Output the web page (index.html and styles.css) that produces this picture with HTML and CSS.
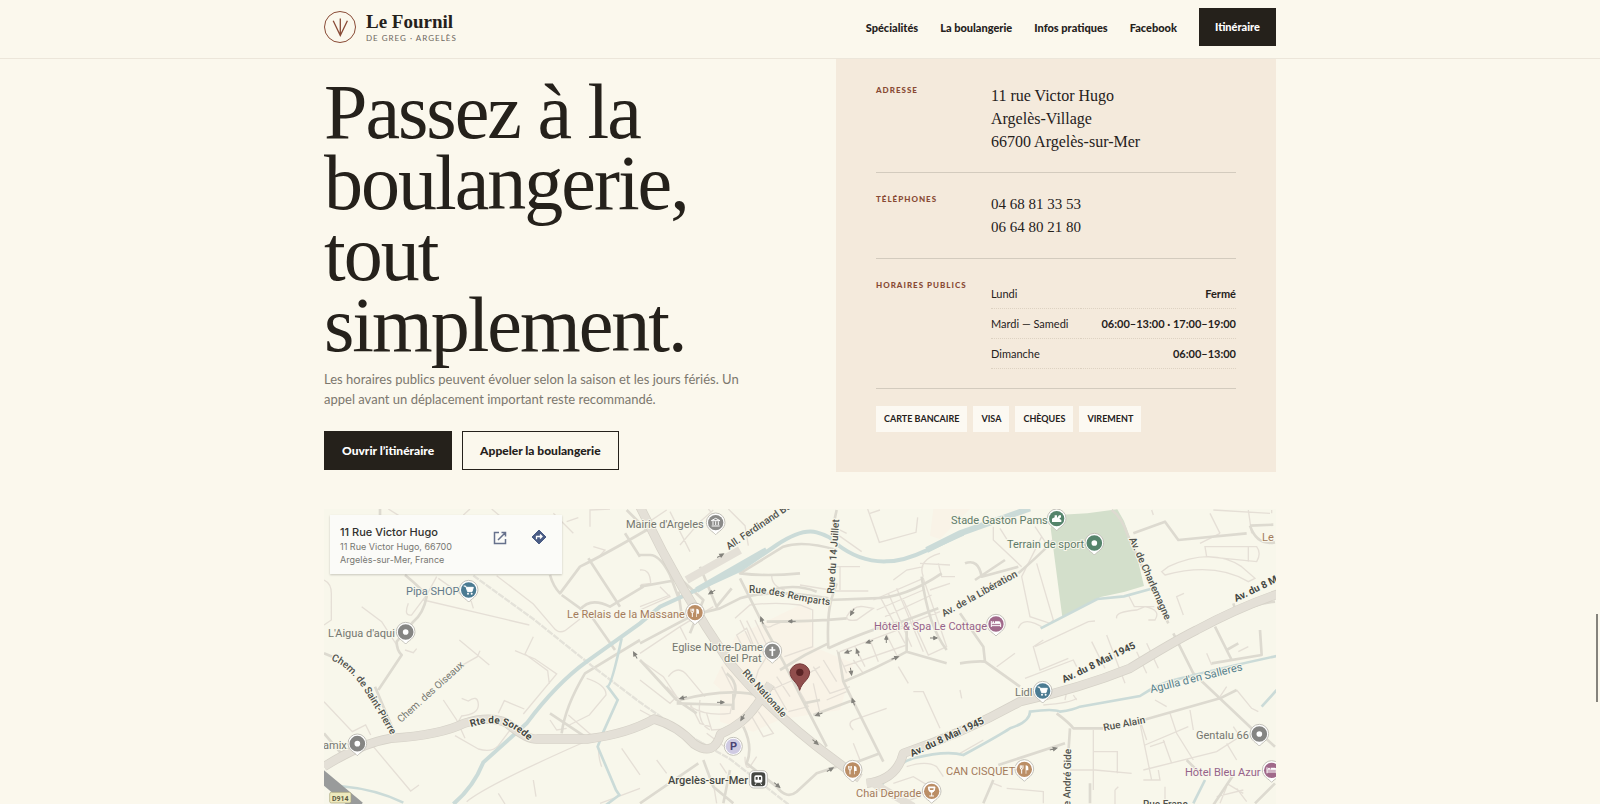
FILE: index.html
```html
<!DOCTYPE html>
<html lang="fr">
<head>
  <meta charset="UTF-8">
  <meta name="viewport" content="width=device-width, initial-scale=1.0">
  <title>Le Fournil de Greg</title>
  <link rel="stylesheet" href="styles.css">
</head>
<body>
  <header class="site-header">
    <div class="container header-inner">
      <a class="brand" href="#">
        <svg class="brand-mark" viewBox="0 0 32 32" aria-hidden="true">
          <circle cx="16" cy="16" r="15.500"/>
          <path d="M16.300 7.500V25M9.200 9.800l7.100 14.700L23.400 9.800" stroke-width="1.300"/>
        </svg>
        <span class="brand-text">
          <span class="brand-name">Le Fournil</span>
          <span class="brand-sub">De Greg · Argelès</span>
        </span>
      </a>
      <nav class="nav">
        <a href="#specialites">Spécialités</a>
        <a href="#boulangerie">La boulangerie</a>
        <a href="#infos">Infos pratiques</a>
        <a href="#facebook">Facebook</a>
        <a class="nav-cta" href="#map">Itinéraire</a>
      </nav>
    </div>
  </header>

  <main class="container">
    <section class="infos" id="infos">
      <div class="intro">
        <h1>Passez à la boulangerie, tout simplement.</h1>
        <p>Les horaires publics peuvent évoluer selon la saison et les jours fériés. Un appel avant un déplacement important reste recommandé.</p>
        <div class="actions">
          <a class="btn btn-dark" href="#map">Ouvrir l’itinéraire</a>
          <a class="btn" href="tel:0468813353">Appeler la boulangerie</a>
        </div>
      </div>

      <div class="card">
        <div class="row">
          <h2>Adresse</h2>
          <address>11 rue Victor Hugo<br>Argelès-Village<br>66700 Argelès-sur-Mer</address>
        </div>
        <div class="row">
          <h2>Téléphones</h2>
          <div class="phones">
            <a href="tel:0468813353">04 68 81 33 53</a>
            <a href="tel:0664802180">06 64 80 21 80</a>
          </div>
        </div>
        <div class="row">
          <h2>Horaires publics</h2>
          <table class="hours">
            <tbody>
              <tr><th scope="row">Lundi</th><td>Fermé</td></tr>
              <tr><th scope="row">Mardi — Samedi</th><td>06:00–13:00 · 17:00–19:00</td></tr>
              <tr><th scope="row">Dimanche</th><td>06:00–13:00</td></tr>
            </tbody>
          </table>
        </div>
        <ul class="payments">
          <li>Carte bancaire</li>
          <li>Visa</li>
          <li>Chèques</li>
          <li>Virement</li>
        </ul>
      </div>
    </section>

    <section class="map" id="map">
      <svg class="map-canvas" viewBox="4 9 952 295" preserveAspectRatio="xMidYMin slice">
        <defs>
          <path id="pin" d="M0 36C-7 27-28 19-28-1A28 28 0 0 1 28-1C28 19 7 27 0 36z"/>
          <g id="fork"><path d="M-8-12v8M-4-12v8M-12-12v8q0 4 4 4t4-4M-8-1v14" fill="none" stroke="#fff" stroke-width="3"/><path d="M4 13V-12q8 0 8 8v7H6v10z" fill="#fff"/></g>
          <g id="cart"><path d="M-15-12h6l6 17h13l4-13H-7" fill="#fff" stroke="#fff" stroke-width="3"/><circle cx="-2" cy="11" r="3" fill="#fff"/><circle cx="9" cy="11" r="3" fill="#fff"/></g>
          <g id="bed"><path d="M-14-9V9M14 9V-1H-14M-14 5H14" stroke="#fff" stroke-width="3" fill="none"/><circle cx="-8" cy="-5" r="3" fill="#fff"/><path d="M-3-8H9q5 0 5 6H-3z" fill="#fff"/></g>
          <path id="arrow" d="M-11 0H2M0-5L11 0 0 5z"/>
          <path id="curve-pierre" d="M11 160C38 170 52 205 74 240"/>
          <path id="curve-sorede" d="M151 227C172 220 188 222 208 240"/>
          <path id="curve-remparts" d="M429 93C453 92 480 103 509 105"/>
        </defs>

        <g transform="scale(.33333)">
          <!-- zones -->
          <path class="zone" d="M1840 27h110l-90 90-30-10zM1245 410l225-110 10 140 120 50-40 140-190 30-130-60-60-50zM1200 545l170-20 60 110-130 60-100-30z"/>
          <path class="park" d="M2192 85l20-40 90-5 90-12 20 35 40 110 20 85-60 18-70 15-115 60z"/>

          <!-- streets -->
          <g class="street">
            <path d="M12 240q22 10 22 40v80l-22 15M12 605l85 90 40-20 15 30M150 728l122 145 25-18M125 320l60 45 45 70M265 310q-15 40 10 35l45-60 30-55M355 235l100 70M310 300q170 40 318 75M460 325l-6-20M530 227l110 85 60 70q15 20 35 10l45-35M418 420l90 75M410 505l62-35 8-18M585 452l60 25 65 45-100 120M640 410l-25 52 68 50 5 40M425 595l20 8q28-20 30 10t-50 35l-20 35M370 600l40 60 25 55M405 707l70 40q40 12 60-10l45-60M535 640l18-38 60 25M440 905q60-50 360-182M640 840l8 50M535 880l20 32M690 660l20 30 30-5M745 645l80 70M800 535q60 20 58 50l-50 60-60 30M905 745l55 80M835 735q0 40 10 65M255 450l25 8 10-12M205 27l40 25M430 45l20-18M515 27l60 50M700 40l60 60M810 80v-50l60-3M740 65l35-12M820 140l35 10-20 22M840 910l120-45"/>
            <path transform="translate(960)" d="M0 210q30-5 32 40l-30 4M0 330l90-40-30-30M0 460l120-80 100-60M0 320l90-35M120 135l60-70 40-35M20 70l60-40M90 35l60 120M285 355l45-40q80-10 150 0l38 15v110l-85 30M300 360l35 75M320 362l40 80M345 360l35 75M290 405l30-20 20 50-30 10zM370 370q10 20 30 5l28-10M395 225q0 35 40 45M480 255l110 18h95M600 200v70M570 200h90M580 95l85 60M590 85l30 15M683 27l35 100 110-30 5-45M690 40l30-10M620 350q20-35 50-30t30 5l-50 35q-30 5-30-10M700 300l150-65 70 205-55 25-75-165M720 290l75 140M745 280l70 160M770 265l80 190M710 330l140-60M735 350l140-65M770 385l130-50M600 455l200-75M610 500l190-65M645 440l30 60M690 420l25 65M740 405l30 60M620 520l-30-70M360 585l100-45 45 80-60 15M400 560l40 70M520 500l50 80 60-20M550 480l40 65M480 535l60-35M560 600l60-25M540 640l-20-90M355 635l45 65-30 10-40-70M380 470l-25 40-15 50M410 530l40 60M775 500l30 50M640 480l30 40M820 575h30l50 110M640 690q-20-20 0-30l100-35M640 730l20 50M0 480l70 50 40 60-20 20L0 540M85 530q30-40 60 0l50 60M150 620q50 30 120 20l15-60-40-80M200 640l15 50 70-5M180 600q-10 70 30 90M150 610l30 60 30 10M80 560l40 40M120 380l20 40M315 770q0 40 15 30l20-30M50 780l30 40M240 790l20 30M220 850l10 60M0 630l110 60 80 40M200 700l80 60M205 27l40 45M265 27l50 50 10 60M850 230q-20-50 50-70M870 270l60-20M895 190l10 40h40M840 190l90 5M760 240l40-30 50-10M760 850l60-20 50 30M800 800q60-20 90 0l20 30M780 910l60-20"/>
            <path transform="translate(1920)" d="M100 80v40l85 80M120 85l25 40M225 80l40 60M245 110l-60 120 25 120 60 20 10-10-50-170M175 385q10-30 50-15l20 10M250 420l-30 20 20 70 85-35M195 535l145-55 10 20M110 500l55-40M0 570l5 25M225 440l160-75 20-2M395 425l40 80M440 405l55 145M530 455l30 65M560 430l35 75M505 285l18 35h60M470 355q-5-20 60-25l25-10q50 10 30 40l-20 0M670 345l-20-55 22-10M250 615q80-5 100-20M315 600l5-25 35-8M340 585l10 15M605 215l20-15q130-60 220 0l40 35-20 10q-100-60-250-20zM735 140h155q15 20 0 45l-150-15zM865 140v45M575 30l5 15M750 40l30 60M760 30l170 10M865 30l10 70M935 30v10M865 440l-30 15M740 460l15 35M720 130l60-30M620 620l-35-20M690 630l10 60M400 690v180M400 755h72v65M330 810h75l110 10M540 670l35 170-25 0M555 735l130-55M560 720l-20-60M610 720l25 70M550 810l220-55 70-45-20-30M570 740l45-15M630 640l20 60 50 80M800 560l-20 30M830 570l45 55 20 10M800 730l30 50M570 840l30 0-5-30M615 860v50M465 870v42M465 870l10-10M140 865l110 10v35M100 850l25 10M0 760l70-40M780 910l20-50M830 865l30 40M800 850l50 30M850 870l-80 20"/>
          </g>
          <g class="road">
            <path d="M255 225q55 45 65 65-10 50-40 75l-50 60q0 25 15 40l-70 105M165 560l55 130M12 460l25 10M690 225q10 35 30 55l60-80q80-40 200-110l-60-60M915 100l45 70M805 175l95 145M725 285l90 65 70 100M780 330q30-40 90-10l100-60M725 700q10-80 70-180l165-100M690 640l105 70M12 700l60 70M180 27v20"/>
            <path transform="translate(960)" d="M0 165h30q30 0 60 60l30 80M0 430l160-85 80-20 60-30q90-30 265 0M115 275l10 70M300 235l70 140 60 110 55 110 75 145M60 180l130 120-40 100M180 200l50 120 45-55M0 260l110-20M565 445q-5-100 10-150l15-45M590 30l-10 45M565 300l130-5q100 0 210-75M380 365q130 0 240-10M565 445q130-60 220-80l110-40M610 545q100-40 190-90l120 35M800 370v90M610 545l-15-90M610 545l120 240M420 510l75-45 70-35M520 645l120-45M640 790l80-30M490 610l50-10M120 600q150-40 250-10M110 610l170 5M0 480l110 120 60 40M280 580v50M310 680q30 60 10 110l90 70q30 40 60 15l60-55 60-20M175 790L0 910M190 780l30 80 60 50M270 810l-20 100M480 220q-100 10-180 0l130-80q60-20 160 10M260 520q40 30 20 80M845 230q20 150 75 220M390 270q80-20 140 5"/>
            <path transform="translate(1920)" d="M0 340l70 100 5 45 105 75M0 490q55-8 75-5M175 220q80-70 105-100M15 190q40-15 50 40l110-30M45 240l90-60M455 30q30 20 50 80l120 260M520 100l95-35 40 55 205-20M640 400q30 60 60 120l180 170M705 400l100-50q80-40 140-45M820 310l10 30M765 380l50 100M800 450l35-20M900 390l5 75-150 25M290 640q40 30 50 45h90M550 660l230-65 50-25M330 685l-8 120M115 795l200-65M100 840l-30 70M870 77l70-3M870 77q20 60 75 50M680 780l30 30M760 915l60-90M945 850l-60 60M900 700l45 40M390 910v-60"/>
          </g>

          <!-- railway -->
          <path class="rail" d="M460 227l180 130 175 140 145 110 130 90 140 80 180 140"/>

          <!-- water -->
          <path class="water thin" d="M60 858q110 10 190 50M905 415q-30 140-42 145l30 40-45 100-15 40 55 130 10 15-40 30M2162 385l170-88 80-8 80-22M1680 870q25-70 100-95 100-25 150-10 110-60 140-80 60-20 60-50 70-10 90 0 40-5 60-15l180-32q60-40 110-50 160-40 300-70"/>
          <path class="water" d="M400 912q60-50 90-125L620 670q90-120 180-185L960 370l60-50 240-110 110-75q75-50 120-38t60 35q70 55 150 52 50 0 120-33l110-50"/>
          <path class="water wide" d="M1130 270l210-120M1820 150l100-50 210-75"/>
          <path class="water thin" d="M2825 620l45-50M2620 910l35-70"/>

          <!-- main roads -->
          <path class="main edge" d="M12 800q110-70 200-85 150-10 220-45 80-25 130 0 60 50 90 47h150q120-15 200-60 70 20 120 75 60 40 80-30 70-30 110-90l40-60M960 20q120 250 270 470 150 180 390 345M1640 850q90-10 110-90 180-60 350-155 180-40 330-100 130-80 200-115 130-70 250-110"/>
          <path class="main" d="M12 800q110-70 200-85 150-10 220-45 80-25 130 0 60 50 90 47h150q120-15 200-60 70 20 120 75 60 40 80-30 70-30 110-90l40-60M960 20q120 250 270 470 150 180 390 345M1640 850q90-10 110-90 180-60 350-155 180-40 330-100 130-80 200-115 130-70 250-110M1100 240l160-90M1660 850l120 70"/>
          <path class="national" d="M0 824l117 98"/>

          <!-- one-way arrows -->
          <g class="arrows">
            <use href="#arrow" transform="translate(1201 167) rotate(-30)"/>
            <use href="#arrow" transform="translate(1176 276) rotate(150)"/>
            <use href="#arrow" transform="translate(1416 364) rotate(180)"/>
            <use href="#arrow" transform="translate(1326 362) rotate(-110)"/>
            <use href="#arrow" transform="translate(1597 336) rotate(120)"/>
            <use href="#arrow" transform="translate(1649 425) rotate(160)"/>
            <use href="#arrow" transform="translate(1699 418) rotate(-90)"/>
            <use href="#arrow" transform="translate(1841 414)"/>
            <use href="#arrow" transform="translate(1585 455) rotate(160)"/>
            <use href="#arrow" transform="translate(1613 458) rotate(-110)"/>
            <use href="#arrow" transform="translate(1725 474) rotate(-20)"/>
            <use href="#arrow" transform="translate(1593 514) rotate(80)"/>
            <use href="#arrow" transform="translate(1600 606) rotate(-110)"/>
            <use href="#arrow" transform="translate(1497 643) rotate(160)"/>
            <use href="#arrow" transform="translate(1090 593) rotate(165)"/>
            <use href="#arrow" transform="translate(1202 607)"/>
            <use href="#arrow" transform="translate(1268 652) rotate(120)"/>
            <use href="#arrow" transform="translate(1486 726) rotate(40)"/>
            <use href="#arrow" transform="translate(1530 809) rotate(-30)"/>
            <use href="#arrow" transform="translate(1371 855) rotate(40)"/>
            <use href="#arrow" transform="translate(2200 747) rotate(-15)"/>
            <use href="#arrow" transform="translate(946 466) rotate(-120)"/>
          </g>

          <!-- pins -->
          <g transform="translate(446 270)"><use href="#pin" class="pin"/><circle r="23" fill="#4b7b92"/><use href="#cart"/></g>
          <g transform="translate(2168 573)"><use href="#pin" class="pin"/><circle r="23" fill="#4b7b92"/><use href="#cart"/></g>
          <g class="dot">
            <g transform="translate(257 396)"><use href="#pin" class="pin"/><circle r="16"/></g>
            <g transform="translate(112 731)"><use href="#pin" class="pin"/><circle r="16"/></g>
            <g transform="translate(2818 702)"><use href="#pin" class="pin"/><circle r="16"/></g>
            <g transform="translate(2323 129)"><use href="#pin" class="pin"/><circle class="green" r="16"/></g>
          </g>
          <g transform="translate(2210 56)"><use href="#pin" class="pin"/><circle r="23" fill="#55846c"/><path d="M-14 10V0l8-4v-6h7v8l6-8h6v6l-5 4 6 4v6z" fill="#fff"/></g>
          <g transform="translate(1187 68)"><use href="#pin" class="pin"/><circle r="23" fill="#8b8b89"/><path d="M-13-6L0-13 13-6zM-12 10h24M-8-4v11M0-4v11M8-4v11" fill="none" stroke="#fff" stroke-width="3"/></g>
          <g transform="translate(1357 454)"><use href="#pin" class="pin"/><circle r="23" fill="#8b8b89"/><path d="M0-14v28M-9-4H9" stroke="#fff" stroke-width="5"/></g>
          <g transform="translate(1125 338)"><use href="#pin" class="pin"/><circle r="23" fill="#bb8e66"/><use href="#fork"/></g>
          <g transform="translate(1598 810)"><use href="#pin" class="pin"/><circle r="23" fill="#bb8e66"/><use href="#fork"/></g>
          <g transform="translate(2113 808)"><use href="#pin" class="pin"/><circle r="23" fill="#bb8e66"/><use href="#fork"/></g>
          <g transform="translate(1835 874)"><use href="#pin" class="pin"/><circle r="23" fill="#bb8e66"/><path d="M-10-13H10L8-2Q0 8-8-2zM0 2v12M-7 14H7" fill="#fff" stroke="#fff" stroke-width="3"/><path d="M-6-9H6l-1 5H-5z" fill="#bb8e66"/></g>
          <g transform="translate(2028 372)"><use href="#pin" class="pin"/><circle r="23" fill="#a0698a"/><use href="#bed"/></g>
          <g transform="translate(2855 811)"><use href="#pin" class="pin"/><circle r="23" fill="#a0698a"/><use href="#bed"/></g>
          <circle class="pin" cx="1240" cy="739" r="27"/><circle cx="1240" cy="739" r="23" fill="#cfcae2"/>
          <g transform="translate(1315 838)"><rect class="pin" x="-27" y="-26" width="54" height="52" rx="13"/><rect x="-21" y="-21" width="42" height="42" rx="10" fill="#454743"/><rect x="-12" y="-12" width="24" height="22" rx="5" fill="#fff"/><path d="M-8-7H-2V1H-8zM2-7H8V1H2z" fill="#454743"/><path d="M-7 12l-3 5M7 12l3 5" stroke="#fff" stroke-width="3"/></g>
          <path class="marker" d="M1439 571C1433 545 1410 540 1410 516A30 30 0 0 1 1469 516C1469 540 1446 545 1439 571z"/>
          <circle cx="1439.500" cy="517" r="11" fill="#5a2425"/>
          <rect x="29" y="877" width="64" height="32" rx="5" fill="#eee9bd" stroke="#a9a47b" stroke-width="2"/>
        </g>

        <!-- labels -->
        <g class="label">
          <text class="shop" x="86" y="95">Pipa SHOP</text>
          <text x="8" y="137">L'Aigua d'aqui</text>
          <text x="3" y="249">amix</text>
          <text x="306" y="28">Mairie d'Argeles</text>
          <text class="food" x="247" y="118">Le Relais de la Massane</text>
          <text x="352" y="151">Eglise Notre-Dame</text>
          <text x="404" y="162">del Prat</text>
          <text class="station" x="348" y="284">Argelès-sur-Mer</text>
          <text class="food" x="536" y="297">Chai Deprade</text>
          <text class="food" x="626" y="275">CAN CISQUET</text>
          <text class="sport" x="631" y="24">Stade Gaston Pams</text>
          <text class="sport" x="687" y="48">Terrain de sport</text>
          <text class="hotel" x="554" y="130">Hôtel &amp; Spa Le Cottage</text>
          <text class="hotel" x="865" y="276">Hôtel Bleu Azur</text>
          <text x="695" y="196">Lidl</text>
          <text x="876" y="239">Gentalu 66</text>
          <text class="food" x="942" y="41">Le</text>
          <text class="river" transform="translate(831 193) rotate(-14)">Agulla d'en Salleres</text>
          <text class="parking" x="410" y="250">P</text>
          <text class="badge" x="12" y="301">D914</text>
        </g>
        <g class="road-label">
          <text><textPath href="#curve-pierre">Chem. de Saint-Pierre</textPath></text>
          <text class="bold"><textPath href="#curve-sorede">Rte de Sorede</textPath></text>
          <text><textPath href="#curve-remparts">Rue des Remparts</textPath></text>
          <text class="light" transform="translate(81 223) rotate(-42)">Chem. des Oiseaux</text>
          <text transform="translate(409 50) rotate(-34)">All. Ferdinand Buisson</text>
          <text transform="translate(514 94) rotate(-86)">Rue du 14 Juillet</text>
          <text transform="translate(422 173) rotate(48)">Rte Nationale</text>
          <text transform="translate(624 117) rotate(-29)">Av. de la Libération</text>
          <text transform="translate(809 39) rotate(66)">Av. de Charlemagne</text>
          <text class="bold" transform="translate(744 183) rotate(-26)">Av. du 8 Mai 1945</text>
          <text class="bold" transform="translate(592 257) rotate(-25)">Av. du 8 Mai 1945</text>
          <text class="bold" transform="translate(916 102) rotate(-26)">Av. du 8 Mai 1945</text>
          <text transform="translate(784 231) rotate(-11)">Rue Alain</text>
          <text transform="translate(750 318) rotate(-89)">Rue André Gide</text>
          <text x="823" y="308">Rue Franç</text>
        </g>
      </svg>

      <div class="place">
        <div class="place-text">
          <strong>11 Rue Victor Hugo</strong>
          <span>11 Rue Victor Hugo, 66700<br>Argelès-sur-Mer, France</span>
        </div>
        <a href="#map" aria-label="Agrandir le plan">
          <svg width="14" height="14" viewBox="0 0 14 14"><path d="M6 1.500H1.500v11h11V8M8.500 1.500h4v4M12.500 1.500L5 9" fill="none" stroke="#66718c" stroke-width="1.500"/></svg>
        </a>
        <a href="#map" aria-label="Itinéraire">
          <svg width="16" height="16" viewBox="0 0 16 16"><path d="M8 1l7 7-7 7-7-7z" fill="#4a5c85" stroke="#4a5c85" stroke-linejoin="round"/><path d="M5.500 10.200V7.500h5M9 5.500l2 2-2 2" fill="none" stroke="#fff" stroke-width="1.300"/></svg>
        </a>
      </div>
    </section>
  </main>
  <div class="scroll-thumb"></div>
</body>
</html>
```

FILE: styles.css
```css
:root {
  --cream: #fbf8ed;
  --sand: #f4eadc;
  --ink: #25211b;
  --muted: #7c776d;
  --brick: #884a35;
  --line: #d3cbbe;
  --serif: "Palatino Linotype", Palatino, "Liberation Serif", serif;
  --sans: "Segoe UI", Lato, sans-serif;
}

* { box-sizing: border-box; margin: 0; padding: 0; }

html, body { height: 100%; }

body {
  display: flex;
  flex-direction: column;
  overflow: hidden;
  background: var(--cream);
  color: var(--ink);
  font-family: var(--sans);
}

a { color: inherit; text-decoration: none; }

.container { width: 100%; max-width: 992px; margin: 0 auto; padding: 0 20px; }

/* Header */
.site-header { border-bottom: 1px solid #ece6da; }
.header-inner { display: flex; align-items: center; justify-content: space-between; padding-top: 8px; padding-bottom: 12px; }
.brand { display: flex; align-items: center; gap: 10px; }
.brand-mark { width: 32px; height: 32px; fill: none; stroke: var(--brick); }
.brand-text { display: flex; flex-direction: column; }
.brand-name { font: bold 19px/22px var(--serif); }
.brand-sub { font-size: 8px; line-height: 11px; letter-spacing: 1px; text-transform: uppercase; color: #6d675e; }
.nav { display: flex; align-items: center; gap: 22px; font-size: 11px; font-weight: 900; }
.nav-cta { padding: 0 16px; line-height: 38px; background: var(--ink); color: #fff; }

/* Infos */
main { flex: 1; display: flex; flex-direction: column; min-height: 0; }
.infos { display: grid; grid-template-columns: 1fr 1fr; gap: 72px; margin-bottom: 37px; }
.intro { padding-top: 17px; }
h1 { font: 400 78px/71px var(--serif); letter-spacing: -2px; margin-bottom: 9px; }
.intro p { max-width: 420px; font-size: 13px; line-height: 20px; color: var(--muted); margin-bottom: 22px; }
.actions { display: flex; gap: 10px; }
.btn { padding: 0 17px; border: 1px solid var(--ink); font-size: 12px; font-weight: 900; line-height: 37px; }
.btn-dark { background: var(--ink); color: #fff; }

/* Card */
.card { background: var(--sand); padding: 5px 40px 40px; }
.row { display: grid; grid-template-columns: 95px 1fr; gap: 20px; padding: 20px 0 19px; border-bottom: 1px solid var(--line); }
.row h2 { font-size: 8px; font-weight: 900; line-height: 12px; letter-spacing: 1px; text-transform: uppercase; white-space: nowrap; color: var(--brick); }
.row address { font: 400 16px/23px var(--serif); }
.phones { display: flex; flex-direction: column; font: 400 15px/23px var(--serif); }
.hours { width: 100%; border-collapse: collapse; font-size: 11px; line-height: 29px; }
.hours tr { border-bottom: 1px dotted #ddd2c2; }
.hours th { font-weight: 400; text-align: left; }
.hours td { font-weight: 700; text-align: right; }
.payments { display: flex; gap: 6px; margin-top: 17px; list-style: none; }
.payments li { padding: 0 8px; background: #fcf9f2; font-size: 9px; font-weight: 700; line-height: 26px; text-transform: uppercase; }

/* Map */
.map { position: relative; flex: 1; min-height: 0; overflow: hidden; background: #f8f7eb; }
.map-canvas { display: block; width: 100%; height: 100%; fill: none; }
.zone { fill: #f9f3e7; }
.park { fill: #d3dfcb; }
.street { stroke: #e5dfd6; stroke-width: 4; }
.road { stroke: #dddad0; stroke-width: 8; stroke-linejoin: round; }
.rail { stroke: #e4e2d9; stroke-width: 7; stroke-dasharray: 20 3; }
.water { stroke: #cbdbd8; stroke-width: 12; }
.water.thin { stroke-width: 8; }
.water.wide { stroke-width: 18; }
.main { stroke: #e4e0d7; stroke-width: 24; stroke-linejoin: round; }
.main.edge { stroke: #d5d1c7; stroke-width: 28; }
.national { stroke: #999b9b; stroke-width: 36; }
.arrows { fill: #83827c; stroke: #83827c; stroke-width: 3; }
.pin { fill: #fff; stroke: #c3c1b9; stroke-width: 3; }
.dot circle { stroke: #858583; stroke-width: 15; fill: #fff; }
.dot .green { stroke: #55846c; }
.marker { fill: #914e4d; stroke: #74393a; stroke-width: 3; }
.label, .road-label { font-family: Roboto, sans-serif; font-size: 11px; fill: #74766f; stroke: #f8f7eb; stroke-width: 2px; paint-order: stroke; }
.road-label { font-weight: 500; fill: #50524d; font-size: 10px; }
.road-label .bold { font-weight: 700; fill: #454743; }
.road-label .light { font-weight: 400; fill: #74766f; }
.shop { fill: #627a8a; }
.food { fill: #a47b5c; }
.hotel { fill: #96638a; }
.sport { fill: #5f7b69; }
.river { fill: #55808c; }
.station { font-weight: 500; fill: #454743; }
.parking { font-weight: 700; fill: #4b4274; stroke: none; }
.badge { font-size: 7px; font-weight: 700; fill: #5a583f; stroke: none; }

.place { position: absolute; top: 6px; left: 6px; display: flex; gap: 24px; width: 232px; height: 59px; padding: 9px 15px 0 10px; background: #fbfbf8; box-shadow: 0 1px 2px #0003; font-family: Inter, sans-serif; }
.place-text { flex: 1; white-space: nowrap; font-size: 9px; line-height: 13px; color: #777772; }
.place strong { display: block; font-size: 11px; font-weight: 500; line-height: 16px; color: #30302d; }
.place a { padding-top: 5px; }

.scroll-thumb { position: fixed; top: 614px; right: 2px; width: 2px; height: 88px; background: #85837c; }
```
